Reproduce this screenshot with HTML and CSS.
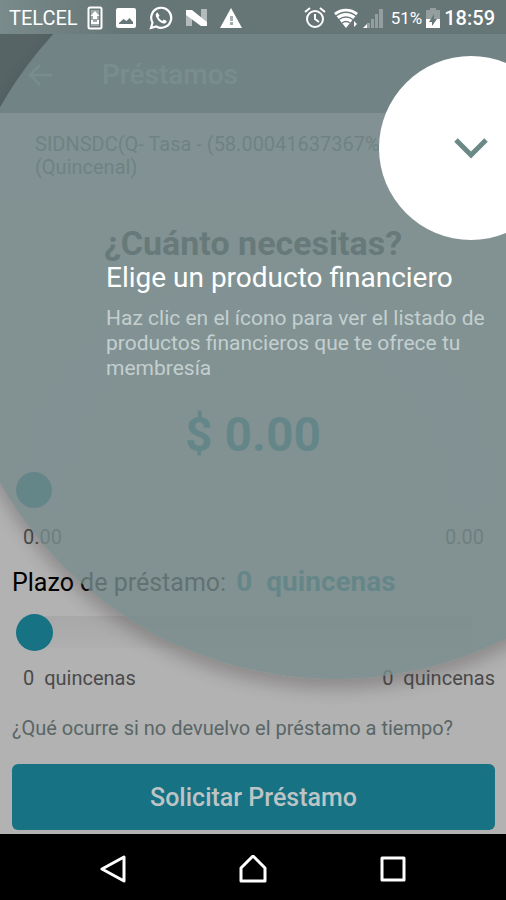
FILE: index.html
```html
<!DOCTYPE html>
<html lang="es">
<head>
<meta charset="utf-8">
<meta name="viewport" content="width=device-width, initial-scale=1">
<title>Préstamos</title>
<link rel="stylesheet" href="styles.css">
</head>
<body>
<div class="phone">
  <div class="status">
    <div class="status-group">
      <span class="carrier">TELCEL</span>
      <svg width="16" height="24" viewBox="0 0 16 24"><rect x="1.5" y="1.5" width="13" height="21" rx="1.5" fill="none" stroke="#fff" stroke-width="2"/><path d="M4 4h8v16H4z" fill="#fff" opacity=".35"/><path d="M8 5l4.500 5H10v3H6v-3H3.500zM4 14h2v2h4v-2h2v4H4z" fill="#fff"/></svg>
      <svg width="20" height="20" viewBox="0 0 20 20"><path fill="#fff" fill-rule="evenodd" d="M2 0h16a2 2 0 0 1 2 2v16a2 2 0 0 1-2 2H2a2 2 0 0 1-2-2V2a2 2 0 0 1 2-2zM3 16h14v-2l-3.500-4-3 3-3-2L3 15z"/></svg>
      <svg width="24" height="24" viewBox="0 0 24 24"><path d="M2 22l1.500-5.300A10 10 0 1 1 7.300 20.500z" fill="none" stroke="#fff" stroke-width="2.200"/><path fill="#fff" d="M8.500 6.500c-1.500.5-2.200 2-1.500 4 1.200 3.300 4 6.200 7.300 7 1.700.4 3.300-.7 3.400-2.500l-3-1.500-1.300 1.500c-1.800-.7-3.200-2.100-4-3.900L10.600 9.700z"/></svg>
      <svg width="21" height="18" viewBox="0 0 21 18"><path fill="#fff" opacity=".5" d="M0 1h6v16H0zM15 0h6v17h-6z"/><path fill="#fff" d="M0 1h6l15 12v4h-6L0 6z"/></svg>
      <svg width="22" height="20" viewBox="0 0 22 20"><path fill="#fff" d="M11 0l11 20H0z"/><path fill="#a3adab" d="M10 8h3v5h-3zM10 14h3v3h-3z"/></svg>
    </div>
    <div class="status-group status-right">
      <svg class="alarm" width="22" height="22" viewBox="0 0 22 22"><g fill="none" stroke="#fff" stroke-width="2"><circle cx="11" cy="12" r="8"/><path d="M11 7v5l4 3M1 5l5-4M21 5l-5-4"/></g></svg>
      <svg width="25" height="20" viewBox="0 0 25 20"><path fill="#fff" d="M12 20L0 5a19 19 0 0 1 24 0z"/><path fill="none" stroke="#6d7b7b" stroke-width="1.500" d="M2 8a15 15 0 0 1 20 0M5 11.500a11 11 0 0 1 14 0M8 15a7 7 0 0 1 8 0"/><path fill="#fff" d="M20 13l3 3-3 3z"/></svg>
      <svg width="20" height="20" viewBox="0 0 20 20"><path fill="#fff" opacity=".3" d="M4 15h3v5H4zM8 11h3v9H8zM12 6h3v14h-3zM16 1h4v19h-4z"/><path fill="#fff" d="M0 20l4-4v4z"/></svg>
      <span class="percent">51%</span>
      <svg width="14" height="20" viewBox="0 0 14 20"><path fill="#fff" opacity=".3" d="M4 0h6v2h4v9H0V2h4z"/><path fill="#fff" d="M0 11h14v9H0z"/><path fill="#68787a" d="M8 6l-5 8h3v4l5-7H8z"/></svg>
      <time class="clock">18:59</time>
    </div>
  </div>

  <main class="app">
    <header class="bar">
      <button class="back" aria-label="Volver"><svg width="24" height="22" viewBox="0 0 24 22"><path d="M24 11H3M12 1L2 11l10 10" fill="none" stroke="currentColor" stroke-width="2.500"/></svg></button>
      <h1>Préstamos</h1>
    </header>
    <div class="product">SIDNSDC(Q- Tasa - (58.00041637367%) (Quincenal)</div>
    <h2>¿Cuánto necesitas?</h2>
    <div class="gauge">
      <svg viewBox="0 0 506 260"><path d="M45 227A212 188 0 0 1 469 227" fill="none" stroke="#b0b0bf" stroke-width="34" stroke-linecap="round"/><circle cx="34" cy="227" r="18" fill="#177284"/></svg>
      <output class="amount">$ 0.00</output>
    </div>
    <div class="limits"><span>0.00</span><span class="limit-max">0.00</span></div>
    <label class="term" for="term">Plazo de préstamo: <strong>0&nbsp; quincenas</strong></label>
    <input class="slider" id="term" type="range" min="0" max="24" value="0">
    <div class="limits term-limits"><span>0&nbsp; quincenas</span><span>0&nbsp; quincenas</span></div>
    <a class="help" href="#">¿Qué ocurre si no devuelvo el préstamo a tiempo?</a>
    <button class="submit">Solicitar Préstamo</button>
  </main>

  <section class="tour">
    <div class="tour-disc"></div>
    <button class="tour-target" aria-label="Ver productos"><svg width="34" height="22" viewBox="0 0 34 22"><path d="M2 3l15 15L32 3" fill="none" stroke="#6b8a86" stroke-width="5"/></svg></button>
    <div class="tour-text">
      <h3>Elige un producto financiero</h3>
      <p>Haz clic en el ícono para ver el listado de productos financieros que te ofrece tu membresía</p>
    </div>
  </section>

  <nav class="keys">
    <button aria-label="Atrás"><svg width="28" height="28" viewBox="0 0 28 28"><path d="M25 2v24L3 14z"/></svg></button>
    <button aria-label="Inicio"><svg width="28" height="28" viewBox="0 0 28 28"><path d="M14 1L2 13v13h24V13z"/></svg></button>
    <button aria-label="Recientes"><svg width="28" height="28" viewBox="0 0 28 28"><path d="M3 3h22v22H3z"/></svg></button>
  </nav>
</div>
</body>
</html>
```
FILE: styles.css
```css
* { box-sizing: border-box; }
body { margin: 0; font-family: Roboto, "Liberation Sans", sans-serif; }
h1, h2, h3, p { margin: 0; }
button { border: 0; padding: 0; background: none; font-family: inherit; color: inherit; }
svg { display: block; }

.phone { position: relative; min-height: 100vh; display: flex; flex-direction: column; overflow: hidden; background: #b2b2b2; }

.status { position: relative; z-index: 2; height: 34px; padding: 2px 11px 0 9px; display: flex; align-items: center; justify-content: space-between; color: #fff; background: linear-gradient(90deg, #7a8b8c, #667576 24%); }
.status-group { display: flex; align-items: center; gap: 13px; }
.status-group svg { flex: none; }
.carrier { margin-right: -4px; font-size: 20px; }
.status-right { gap: 4px; }
.alarm { margin-right: 4px; }
.percent { margin-left: 4px; font-size: 17px; }
.clock { font-size: 20px; font-weight: 500; }

.app { flex: 1; display: flex; flex-direction: column; }
.bar { height: 79px; padding: 2px 28px 0; display: flex; align-items: center; gap: 50px; background: #566466; color: #84969a; }
.bar h1 { font-size: 28px; font-weight: 500; }
.product { padding: 20px 110px 16px 35px; font-size: 20px; line-height: 23px; color: #4f5c5c; background: #b0b0bd; }
h2 { margin-top: 28px; text-align: center; font-size: 34px; line-height: 40px; color: #222c2c; }
.gauge { display: grid; }
.gauge > * { grid-area: 1 / 1; width: 100%; }
.amount { align-self: end; padding-bottom: 60px; text-align: center; font-size: 48px; line-height: 56px; font-weight: 700; color: #177284; }
.limits { padding: 0 22px 0 23px; display: flex; justify-content: space-between; font-size: 20px; line-height: 28px; color: #4a4a4a; }
.term { margin-top: 16px; padding: 0 12px; font-size: 25px; line-height: 30px; color: #000; white-space: nowrap; }
.term strong { margin-left: 4px; font-size: 28px; color: #177284; }
.slider { appearance: none; margin: 14px 16px 12px; height: 40px; background: linear-gradient(#a8a8a8, #afafaf) no-repeat center / calc(100% - 36px) 32px; }
.slider::-webkit-slider-thumb { appearance: none; width: 37px; height: 37px; border-radius: 50%; background: #177284; }
.term-limits { padding-right: 11px; }
.help { margin: 22px 12px; font-size: 20px; line-height: 28px; color: #596666; text-decoration: none; }
.submit { margin: 0 11px 4px 12px; height: 66px; border-radius: 6px; background: #177284; color: #bcc4c5; font-size: 25px; font-weight: 500; }

.tour { position: absolute; inset: 0; overflow: hidden; }
.tour-disc { position: absolute; top: -89px; right: -213px; width: 768px; height: 768px; border-radius: 50%; background: rgba(119, 139, 139, .815); box-shadow: 0 10px 16px rgba(60, 50, 50, .3); }
.tour-target { position: absolute; top: 56px; right: -57px; width: 184px; height: 184px; border-radius: 50%; background: #fff; display: grid; place-items: center; }
.tour-text { position: absolute; top: 261px; left: 106px; right: 16px; color: #fff; }
.tour-text h3 { font-size: 28px; line-height: 34px; font-weight: 400; }
.tour-text p { margin-top: 11px; font-size: 21px; line-height: 25px; color: #c3cfcf; }

.keys { position: relative; z-index: 2; height: 67px; padding-top: 2px; display: flex; justify-content: center; align-items: center; gap: 112px; background: #000; }
.keys path { fill: none; stroke: #fff; stroke-width: 3; stroke-linejoin: round; }
```
